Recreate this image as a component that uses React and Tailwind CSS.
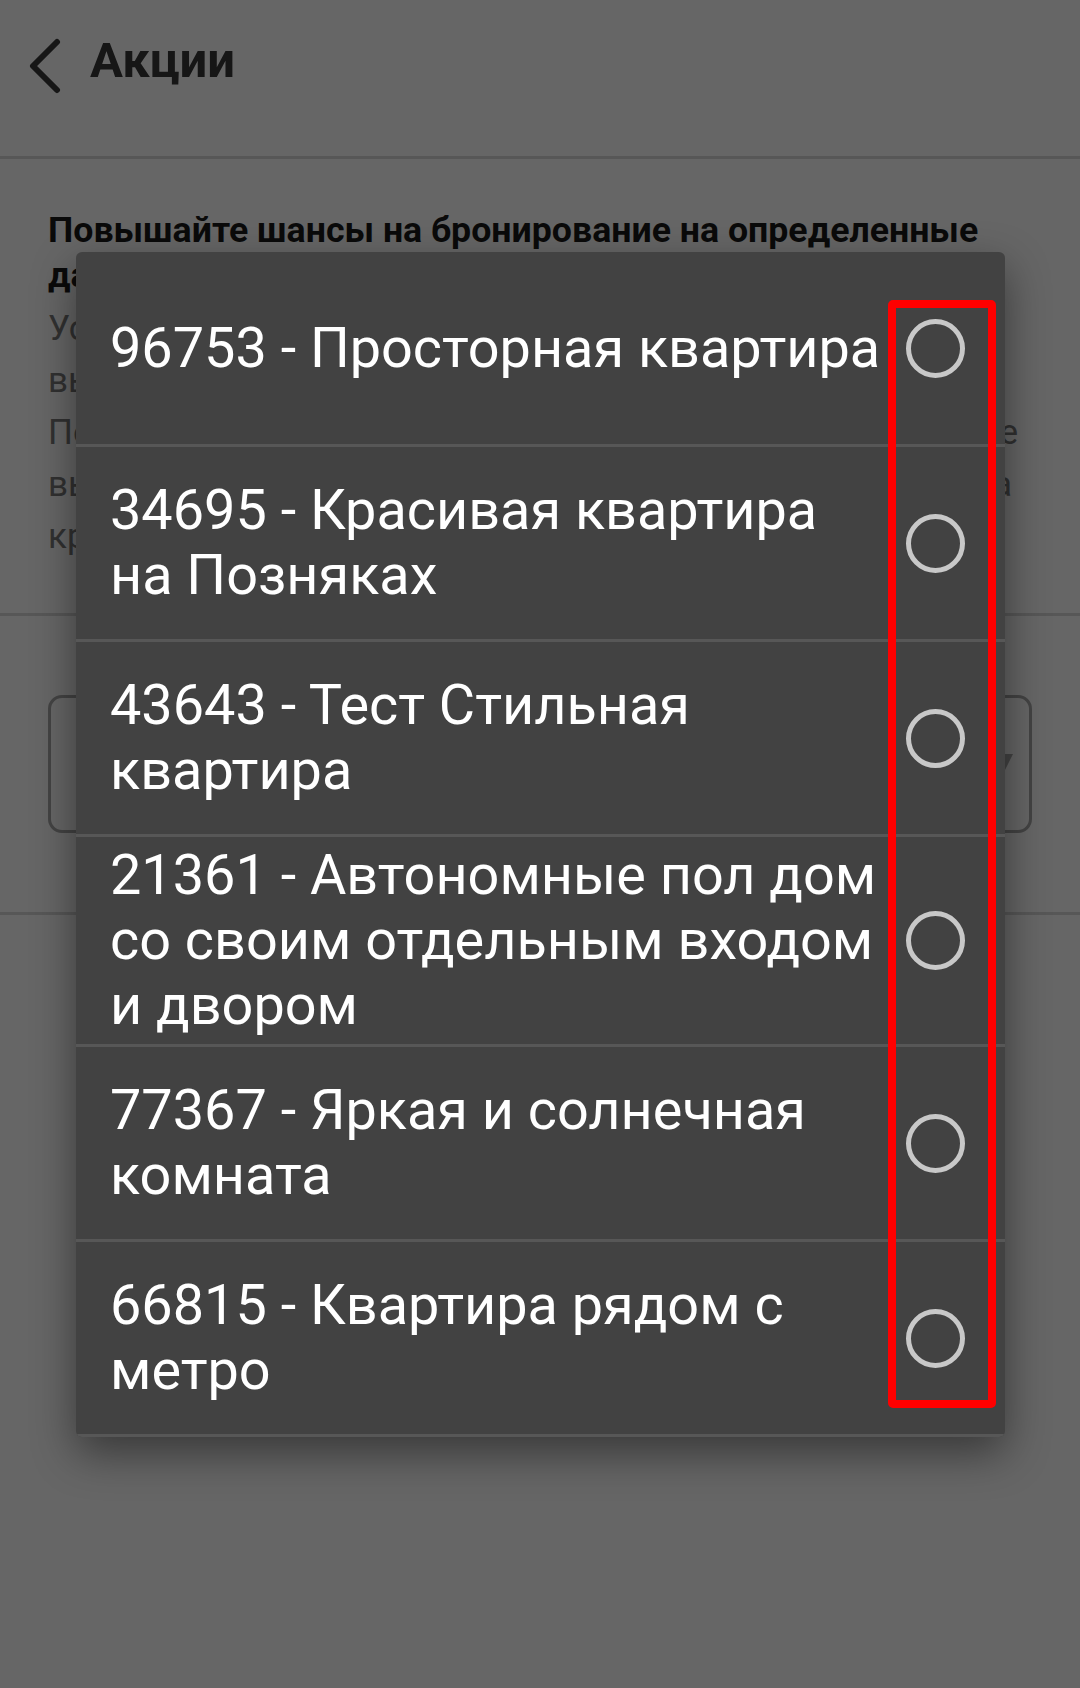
import React from 'react';

const listings = [
  ['96753 - Просторная квартира'],
  ['34695 - Красивая квартира', 'на Позняках'],
  ['43643 - Тест Стильная', 'квартира'],
  ['21361 - Автономные пол дом', 'со своим отдельным входом', 'и двором'],
  ['77367 - Яркая и солнечная', 'комната'],
  ['66815 - Квартира рядом с', 'метро'],
];

const ListingRow = ({ lines }) => (
  <div className="flex items-center min-h-[195px] py-[6px] pl-[34px] pr-[40px] border-b-[3px] border-[#575757] last:border-b-0">
    <div className="flex-1 text-[55.8px] leading-[65px] text-white whitespace-nowrap">
      {lines.map((line, i) => (
        <div key={i}>{line}</div>
      ))}
    </div>
    <span className="shrink-0 w-[59px] h-[59px] rounded-full border-[5px] border-[#c8c8c8]" />
  </div>
);

export default function App() {
  return (
    <div className="relative w-[1080px] h-[1688px] overflow-hidden bg-white font-['Roboto',sans-serif]">
      {/* Toolbar */}
      <div className="h-[159px] flex items-start pl-[26px] pt-[32px] border-b-[3px] border-[#d9d9d9]">
        <svg className="mt-[6px] w-[40px] h-[56px]" viewBox="0 0 40 56" fill="none">
          <polyline points="31,4 7,28 31,52" stroke="#383838" strokeWidth="6" strokeLinecap="round" strokeLinejoin="round" />
        </svg>
        <h1 className="ml-[24px] text-[49px] leading-[57px] font-bold text-[#383838]">Акции</h1>
      </div>

      {/* Description */}
      <div className="px-[48px]">
        <p className="mt-[49px] text-[35.7px] leading-[45px] font-bold text-[#1a1a1a] whitespace-nowrap">
          Повышайте шансы на бронирование на определенные
          <br />
          даты
        </p>
        <div className="mt-[5px] text-[35px] leading-[52px] text-[#7a7a7a] whitespace-nowrap">
          <div>Установите скидку на выбранные даты, чтобы</div>
          <div>выделить ваше объявление среди других</div>
          <div className="w-[970px] text-justify [text-align-last:justify]">Показываем предложение гостям в поиске и на странице</div>
          <div className="w-[964px] text-justify [text-align-last:justify]">выбранного объекта в виде яркой метки и значка</div>
          <div>краткий срок.</div>
        </div>
      </div>

      <div className="mt-[50px] border-t-[3px] border-[#dadada]" />

      {/* Listing picker */}
      <div className="px-[48px] py-[79px]">
        <div className="h-[138px] flex items-center justify-between pl-[32px] pr-[16px] rounded-[14px] border-[3px] border-[#aaaaaa]">
          <span className="text-[35px] text-[#555555]">Выберите объекты</span>
          <svg className="w-[20px] h-[20px]" viewBox="0 0 20 20">
            <polygon points="0,0 20,0 10,20" fill="#aaaaaa" />
          </svg>
        </div>
      </div>

      <div className="border-t-[3px] border-[#dadada]" />

      {/* Scrim */}
      <div className="absolute inset-0 bg-black/60" />

      {/* Dialog */}
      <div className="absolute left-[76px] top-[252px] w-[929px] bg-[#424242] rounded-[6px] overflow-hidden shadow-[0_16px_44px_rgba(0,0,0,0.45)]">
        {listings.map((lines, i) => (
          <ListingRow key={i} lines={lines} />
        ))}
        {/* highlight */}
        <div className="absolute left-[812px] top-[48px] w-[108px] h-[1108px] rounded-[5px] border-[8px] border-[#ff0000]" />
      </div>
    </div>
  );
}
